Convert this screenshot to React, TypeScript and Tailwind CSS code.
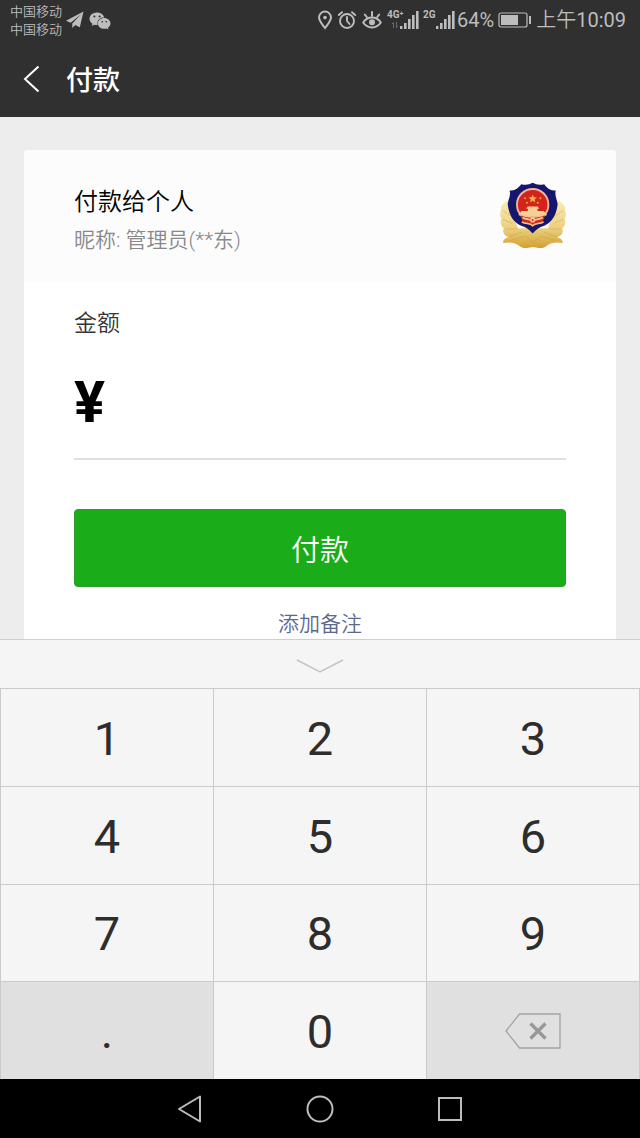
import React, { useState } from 'react';
import { FaWeixin } from 'react-icons/fa';

const DIGITS = ['1', '2', '3', '4', '5', '6', '7', '8', '9'];

function Signal({ label, data }: { label: string; data?: boolean }) {
  return (
    <div className="relative flex h-5 w-8 justify-end">
      <span className="absolute left-0 top-0 text-[10px] font-bold leading-[10px]">{label}</span>
      <svg className="h-5 w-5" viewBox="0 0 20 20" fill="currentColor">
        <rect x="1" y="16" width="2.4" height="3" />
        <rect x="5" y="13" width="2.6" height="6" />
        <rect x="9" y="9" width="2.6" height="10" />
        <rect x="13" y="5" width="2.6" height="14" />
        <rect x="17" y="1" width="2.6" height="18" />
      </svg>
      {data && (
        <svg className="absolute bottom-px left-1 h-2 w-2 opacity-40" viewBox="0 0 8 8" fill="none" stroke="currentColor">
          <path d="M2.5 7V1.5L1 3M5.5 1v5.5L7 5" />
        </svg>
      )}
    </div>
  );
}

function StatusBar() {
  return (
    <div className="flex h-10 items-center justify-between pl-[10px] pr-[14px] text-[#bdbdbd]">
      <div className="flex items-center">
        <div className="pt-px text-[13px] font-[350] leading-[18px]">
          <div>中国移动</div>
          <div>中国移动</div>
        </div>
        <svg className="ml-1 h-[18px] w-[18px]" viewBox="0 0 18 18" fill="currentColor">
          <path d="M17.500.5 0 9.800l4.700 2L15 3.300 6.300 12.600V17l3-3.100 4.500 2.300z" />
        </svg>
        <FaWeixin className="ml-[5px] mt-px h-[22px] w-[22px]" />
      </div>
      <div className="flex items-center">
        <svg className="h-[20px] w-4" viewBox="0 0 16 20" fill="none" stroke="currentColor" strokeWidth="2">
          <path d="M8 18C5 14 2 11 2 7.600a6 6 0 0 1 12 0C14 11 11 14 8 18z" />
          <circle cx="8" cy="7.600" r="1.800" fill="currentColor" stroke="none" />
        </svg>
        <svg className="ml-1 h-5 w-5" viewBox="0 0 20 20" fill="none" stroke="currentColor" strokeWidth="1.900" strokeLinecap="round">
          <circle cx="10" cy="11" r="7" />
          <path d="M10 7v4l2.500 3M1.800 5 5 2.200M18.200 5 15 2.200" />
        </svg>
        <svg className="ml-[5px] h-5 w-5" viewBox="0 0 20 20" fill="none" stroke="currentColor" strokeWidth="2" strokeLinecap="round">
          <path d="M1.200 12.500C5.500 5.800 14.500 5.800 18.800 12.500 14.500 19 5.500 19 1.200 12.500z" />
          <circle cx="10" cy="12.300" r="3" fill="currentColor" stroke="none" />
          <path d="M10 2v4M2.800 4.500l2 2.500M17.200 4.500l-2 2.500" />
        </svg>
        <div className="ml-[5px] flex gap-1">
          <Signal label="4G⁺" data />
          <Signal label="2G" />
        </div>
        <span className="ml-[2px] text-[20px] leading-6">64%</span>
        <svg className="ml-1 h-4 w-[34px]" viewBox="0 0 34 16" fill="none">
          <rect x="1" y="1" width="28" height="14" rx="2" stroke="currentColor" strokeWidth="1.200" />
          <rect x="3" y="3" width="17" height="10" fill="currentColor" />
          <rect x="31" y="4" width="2" height="8" fill="currentColor" />
        </svg>
        <span className="ml-1 text-[20px] leading-6">
          <span className="font-[350]">上午</span>10:09
        </span>
      </div>
    </div>
  );
}

function PoliceBadge() {
  return (
    <svg className="h-[69px] w-[66px] shrink-0" viewBox="30 36 206 214" role="img" aria-label="头像">
      <defs>
        <linearGradient id="gold" x1="0" y1="0" x2="0" y2="1">
          <stop offset="0" stopColor="#f9ecb8" />
          <stop offset="0.600" stopColor="#ebcf7c" />
          <stop offset="1" stopColor="#d2a032" />
        </linearGradient>
      </defs>
      {/* wings */}
      <path
        d="M56 92C42 98 30 110 34 122 28 134 30 144 35 150 29 162 34 174 42 180 36 192 44 204 58 207 46 210 38 216 40 226 58 222 76 224 90 234 108 248 122 238 133 238 144 238 158 248 176 234 190 224 206 222 226 226 226 216 218 210 208 207 222 204 230 192 224 180 232 174 237 162 231 150 236 144 238 134 232 122 236 110 224 98 210 92L180 180H86z"
        fill="url(#gold)"
      />
      <path
        d="M38 124 62 140M38 152 68 164M46 182 84 182M60 206 98 192M228 124 204 140M228 152 198 164M220 182 182 182M206 206 168 192M62 218 110 204 133 224 156 204 204 218"
        fill="none"
        stroke="#c4963a"
        strokeWidth="3"
        opacity="0.400"
      />
      {/* shield */}
      <path
        d="M132 38C120 45 108 45 96 42 88 54 76 62 60 62 64 76 57 88 54 104 58 136 68 158 96 172 112 176 122 186 132 196 142 186 152 176 168 172 196 158 206 136 210 104 207 88 200 76 204 62 188 62 176 54 168 42 156 45 144 45 132 38z"
        fill="#16166e"
      />
      <circle cx="132" cy="106" r="49" fill="#d4231c" stroke="#f0b896" strokeWidth="6" />
      <path d="m132 74 4 9 9 1-7 6 2 9-8-5-8 5 2-9-7-6 9-1z" fill="#efb04c" />
      <g fill="#efb04c">
        <circle cx="108" cy="86" r="3" />
        <circle cx="114" cy="100" r="3" />
        <circle cx="148" cy="100" r="3" />
        <circle cx="156" cy="86" r="3" />
      </g>
      <path d="M116 112h32l4 7h-5v7h20l10 12c-28 12-62 12-90 0l10-12h20v-7h-5z" fill="#f5cf94" />
      <path d="M94 138c26 8 50 8 76 0l-6 22c-10 6-20 2-32 10-12-8-22-4-32-10z" fill="#cf2a1e" />
      <path d="M92 136c26 12 54 12 80 0M98 160c14 8 24 2 34 12 10-10 20-4 34-12M100 146c14 8 22 4 32 10 10-6 18-2 32-10" fill="none" stroke="#f0c890" strokeWidth="5" />
      <circle cx="132" cy="154" r="8" fill="#f3cf90" />
      <circle cx="132" cy="154" r="3" fill="#cf2a1e" />
    </svg>
  );
}

function Keypad({ onKey, onDelete }: { onKey: (key: string) => void; onDelete: () => void }) {
  const key = 'bg-[#f5f5f5] pt-[2px] text-[47px] leading-none text-[#2d2d2d] active:bg-[#e0e0e0]';
  return (
    <div className="border-t border-[#cfcfcf] bg-[#f5f5f5]">
      <button className="flex h-12 w-full items-center justify-center" aria-label="收起键盘">
        <svg className="mt-1 h-4 w-12" viewBox="0 0 48 16" fill="none" stroke="#c4c4c4" strokeWidth="1.500">
          <path d="M1 2 24 14 47 2" />
        </svg>
      </button>
      <div className="grid h-[391px] grid-cols-3 grid-rows-4 gap-px border-x border-t border-[#cbcbcb] bg-[#cbcbcb]">
        {DIGITS.map((d) => (
          <button key={d} className={key} onClick={() => onKey(d)}>
            {d}
          </button>
        ))}
        <button className="bg-[#e0e0e0] pt-[2px] text-[47px] leading-none text-[#2d2d2d]" onClick={() => onKey('.')}>
          .
        </button>
        <button className={key} onClick={() => onKey('0')}>
          0
        </button>
        <button className="flex items-center justify-center bg-[#e0e0e0]" onClick={onDelete} aria-label="删除">
          <svg className="h-9 w-14" viewBox="0 0 56 36" fill="none">
            <path d="M1 18 14.500 1H55v34H14.500z" stroke="#a3a3a3" strokeWidth="1.300" />
            <path d="m25.500 10.500 15 15M40.500 10.500l-15 15" stroke="#989898" strokeWidth="3.300" />
          </svg>
        </button>
      </div>
    </div>
  );
}

function NavBar() {
  return (
    <nav className="flex h-[59px] items-center justify-center gap-[102px] bg-black">
      <button aria-label="返回">
        <svg className="h-7 w-7" viewBox="0 0 28 28" fill="none" stroke="#bdbdbd" strokeWidth="2" strokeLinejoin="round">
          <path d="M3 14 24 1.500v25z" />
        </svg>
      </button>
      <button aria-label="主屏幕">
        <svg className="h-7 w-7" viewBox="0 0 28 28" fill="none" stroke="#bdbdbd" strokeWidth="2">
          <circle cx="14" cy="14" r="12.500" />
        </svg>
      </button>
      <button aria-label="最近任务">
        <svg className="h-7 w-7" viewBox="0 0 28 28" fill="none" stroke="#bdbdbd" strokeWidth="2">
          <rect x="3" y="3" width="22" height="22" />
        </svg>
      </button>
    </nav>
  );
}

export default function App() {
  const [amount, setAmount] = useState('');

  return (
    <div className="flex min-h-screen flex-col bg-[#ededed] font-['Roboto','Noto_Sans_CJK_SC',sans-serif]">
      <header className="bg-[#303030]">
        <StatusBar />
        <div className="flex h-[77px] items-center pl-[22px] text-white">
          <button aria-label="返回">
            <svg className="h-7 w-5" viewBox="0 0 20 28" fill="none" stroke="currentColor" strokeWidth="2">
              <path d="M16.500 1.500 3 14l13.500 12.500" />
            </svg>
          </button>
          <h1 className="ml-6 pt-1 text-[27px] font-medium leading-9">付款</h1>
        </div>
      </header>

      <main className="flex flex-1 flex-col px-6 pt-[33px]">
        <div className="flex flex-1 flex-col rounded-t-sm bg-white">
          <div className="flex justify-between rounded-t-sm bg-[#fcfcfc] px-[50px] pb-[26px] pt-8">
            <div className="pt-[2px]">
              <h2 className="text-[24px] font-[350] leading-9 text-black">付款给个人</h2>
              <p className="mt-1 text-[21px] font-[350] leading-8 text-[#888888]">昵称: 管理员(**东)</p>
            </div>
            <PoliceBadge />
          </div>

          <div className="flex flex-col px-[50px] pt-6">
            <label htmlFor="amount" className="text-[23px] font-[350] leading-9 text-[#353535]">
              金额
            </label>
            <div className="mt-6 flex h-[94px] items-start border-b-2 border-[#e0e0e0] text-[58px] leading-[72px]">
              <span className="font-bold text-black">¥</span>
              <input
                id="amount"
                className="ml-3 min-w-0 flex-1 bg-transparent outline-none"
                value={amount}
                onChange={(e) => setAmount(e.target.value)}
              />
            </div>
            <button className="mt-[49px] h-[78px] rounded-[4px] border border-[#2f9a2f] bg-[#1aad19] pt-2 text-[29px] font-[350] text-white">
              付款
            </button>
            <a href="#remark" className="mt-[22px] self-center text-[21px] font-[350] leading-[30px] text-[#5c6a90]">
              添加备注
            </a>
          </div>
        </div>
      </main>

      <Keypad onKey={(k) => setAmount(amount + k)} onDelete={() => setAmount(amount.slice(0, -1))} />
      <NavBar />
    </div>
  );
}
